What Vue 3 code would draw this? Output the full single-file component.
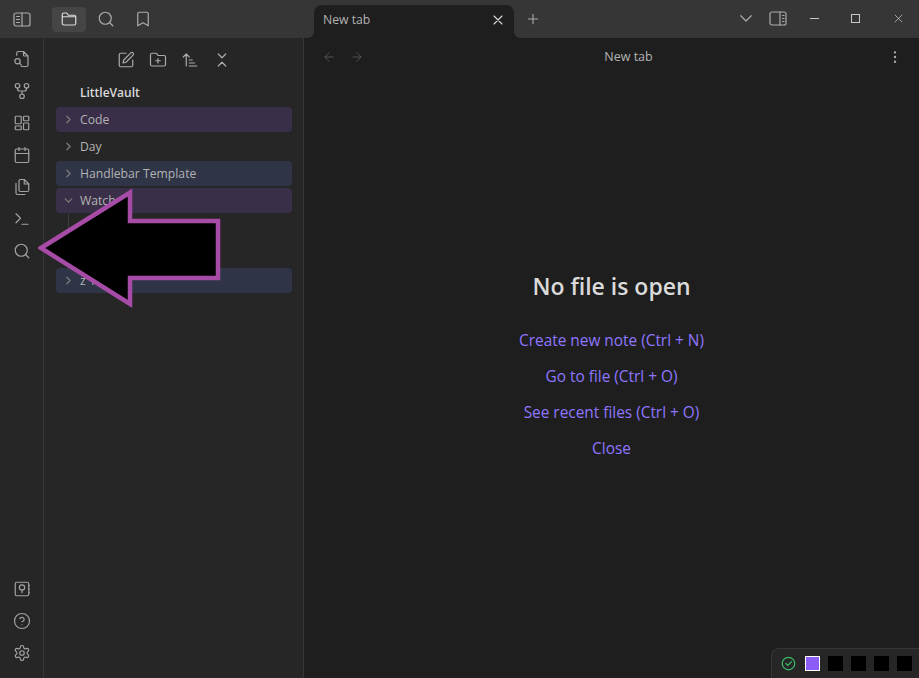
<template>
  <div class="app">
    <!-- Barra superior -->
    <header class="titlebar">
      <div class="tb-left">
        <button class="tb-btn">
          <svg viewBox="0 0 18 15" class="ico panel-ico"><rect x="1" y="1" width="16" height="13" rx="2"/><path d="M9 1v13M3.5 4.500h3M3.500 7.500h3M3.500 10.500h3"/></svg>
        </button>
        <div class="tb-tabs">
          <button class="tb-btn active">
            <svg viewBox="0 0 24 24" class="ico"><path d="M3 9V6a2 2 0 0 1 2-2h4l2 3h8a2 2 0 0 1 2 2v9a2 2 0 0 1-2 2H5a2 2 0 0 1-2-2V9h18"/></svg>
          </button>
          <button class="tb-btn">
            <svg viewBox="0 0 24 24" class="ico"><circle cx="11" cy="11" r="8"/><path d="m21 21-4.300-4.300"/></svg>
          </button>
          <button class="tb-btn">
            <svg viewBox="0 0 24 24" class="ico"><path d="M19 21l-7-4-7 4V5a2 2 0 0 1 2-2h10a2 2 0 0 1 2 2z"/></svg>
          </button>
        </div>
      </div>
      <div class="tab-strip">
        <div class="tab">
          <span>New tab</span>
          <svg viewBox="0 0 24 24" class="ico close-ico"><path d="M18 6 6 18M6 6l12 12"/></svg>
        </div>
        <svg viewBox="0 0 24 24" class="ico plus-ico"><path d="M12 5v14M5 12h14"/></svg>
      </div>
      <div class="tb-right">
        <svg viewBox="0 0 24 24" class="ico chev-ico"><path d="m5 9 7 7 7-7"/></svg>
        <svg viewBox="0 0 18 15" class="ico panel-ico side-ico"><rect x="1" y="1" width="16" height="13" rx="2"/><path d="M11 1v13M13.500 4.500h1.500M13.500 7.500h1.500M13.500 10.500h1.500"/></svg>
        <div class="win-btns">
          <span class="win"><i class="win-min"></i></span>
          <span class="win"><i class="win-max"></i></span>
          <span class="win">
            <svg viewBox="0 0 12 12" class="win-x"><path d="M1 1l10 10M11 1 1 11"/></svg>
          </span>
        </div>
      </div>
    </header>

    <div class="body">
      <!-- Ribbon -->
      <nav class="ribbon">
        <div class="rib-group">
          <svg viewBox="0 0 24 24" class="ico"><path d="M14 2v5a1 1 0 0 0 1 1h5M5 7V4a2 2 0 0 1 2-2h7l6 6v12a2 2 0 0 1-2 2h-7"/><circle cx="6" cy="15" r="3.500"/><path d="m9 18 2 2"/></svg>
          <svg viewBox="0 0 24 24" class="ico"><circle cx="6" cy="5" r="3"/><circle cx="18" cy="5" r="3"/><circle cx="12" cy="19" r="3"/><path d="M6 8v1a3 3 0 0 0 3 3h6a3 3 0 0 0 3-3V8M12 12v4"/></svg>
          <svg viewBox="0 0 24 24" class="ico"><rect x="3" y="3" width="8" height="10" rx="1"/><rect x="14" y="3" width="7" height="6" rx="1"/><rect x="14" y="12" width="7" height="9" rx="1"/><rect x="3" y="16" width="8" height="5" rx="1"/></svg>
          <svg viewBox="0 0 24 24" class="ico"><rect x="3" y="4" width="18" height="18" rx="2"/><path d="M8 2v4M16 2v4M3 10h18"/></svg>
          <svg viewBox="0 0 24 24" class="ico"><path d="M15 2h-5a2 2 0 0 0-2 2v12a2 2 0 0 0 2 2h9a2 2 0 0 0 2-2V8z"/><path d="M15 2v6h6M4 7v13a2 2 0 0 0 2 2h10"/></svg>
          <svg viewBox="0 0 24 24" class="ico"><path d="m4 17 6-6-6-6M12 19h8"/></svg>
          <svg viewBox="0 0 24 24" class="ico"><circle cx="11" cy="11" r="8"/><path d="m21 21-4.300-4.300"/></svg>
        </div>
        <div class="rib-group">
          <svg viewBox="0 0 24 24" class="ico"><rect x="3" y="3" width="18" height="18" rx="2"/><circle cx="12" cy="10" r="3.500"/><path d="M12 13.500V17M21 7h1M21 12h1M21 17h1"/></svg>
          <svg viewBox="0 0 24 24" class="ico"><circle cx="12" cy="12" r="10"/><path d="M9.100 9a3 3 0 0 1 5.800 1c0 2-3 3-3 3M12 17h.01"/></svg>
          <svg viewBox="0 0 24 24" class="ico"><path d="M12.200 2h-.4a2 2 0 0 0-2 2v.2a2 2 0 0 1-1 1.700l-.4.3a2 2 0 0 1-2 0l-.2-.1a2 2 0 0 0-2.700.7l-.2.4a2 2 0 0 0 .7 2.700l.2.1a2 2 0 0 1 1 1.700v.5a2 2 0 0 1-1 1.700l-.2.1a2 2 0 0 0-.7 2.700l.2.4a2 2 0 0 0 2.700.7l.2-.1a2 2 0 0 1 2 0l.4.3a2 2 0 0 1 1 1.700v.2a2 2 0 0 0 2 2h.4a2 2 0 0 0 2-2v-.2a2 2 0 0 1 1-1.700l.4-.3a2 2 0 0 1 2 0l.2.1a2 2 0 0 0 2.700-.7l.2-.4a2 2 0 0 0-.7-2.700l-.2-.1a2 2 0 0 1-1-1.700v-.5a2 2 0 0 1 1-1.700l.2-.1a2 2 0 0 0 .7-2.700l-.2-.4a2 2 0 0 0-2.700-.7l-.2.1a2 2 0 0 1-2 0l-.4-.3a2 2 0 0 1-1-1.700V4a2 2 0 0 0-2-2z"/><circle cx="12" cy="12" r="3"/></svg>
        </div>
      </nav>

      <!-- Explorador -->
      <aside class="sidebar">
        <div class="side-actions">
          <svg viewBox="0 0 24 24" class="ico"><path d="M12 3H5a2 2 0 0 0-2 2v14a2 2 0 0 0 2 2h14a2 2 0 0 0 2-2v-7"/><path d="M18.400 2.600a2.100 2.100 0 1 1 3 3L12 15l-4 1 1-4z"/></svg>
          <svg viewBox="0 0 24 24" class="ico"><path d="M20 20a2 2 0 0 0 2-2V8a2 2 0 0 0-2-2h-8l-2-3H4a2 2 0 0 0-2 2v13a2 2 0 0 0 2 2zM12 10v6M9 13h6"/></svg>
          <svg viewBox="0 0 24 24" class="ico"><path d="m3 8 4-4 4 4M7 4v16M11 12h4M11 16h7M11 20h10"/></svg>
          <svg viewBox="0 0 24 24" class="ico"><path d="m7 20 5-5 5 5M7 4l5 5 5-5"/></svg>
        </div>
        <div class="vault">LittleVault</div>
        <div class="tree">
          <div v-for="row in rows" :key="row.id" class="row" :class="[row.tone, { child: row.label === null }]">
            <svg v-if="row.label !== null" viewBox="0 0 24 24" class="ico row-chev"><path :d="row.open ? 'm6 9 6 6 6-6' : 'm9 6 6 6-6 6'"/></svg>
            <i v-else class="guide"></i>
            <span class="row-label">{{ row.label }}</span>
          </div>
        </div>
      </aside>

      <!-- Contenido principal -->
      <main class="main">
        <div class="view-head">
          <div class="nav-arrows">
            <svg viewBox="0 0 24 24" class="ico"><path d="m12 19-7-7 7-7M19 12H5"/></svg>
            <svg viewBox="0 0 24 24" class="ico"><path d="M5 12h14M12 5l7 7-7 7"/></svg>
          </div>
          <span class="view-title">New tab</span>
          <svg viewBox="0 0 24 24" class="ico more-ico"><circle cx="12" cy="5" r="1"/><circle cx="12" cy="12" r="1"/><circle cx="12" cy="19" r="1"/></svg>
        </div>
        <div class="empty">
          <h1>No file is open</h1>
          <a v-for="link in links" :key="link">{{ link }}</a>
        </div>
      </main>
    </div>

    <!-- Barra de estado -->
    <div class="status">
      <svg viewBox="0 0 24 24" class="ok-ico"><circle cx="12" cy="12" r="10"/><path d="m8 12 3 3 6-6"/></svg>
      <span class="swatch current"></span>
      <span v-for="n in 4" :key="n" class="swatch"></span>
    </div>

    <!-- Flecha de anotación sobre la captura -->
    <svg class="arrow" width="190" height="130" viewBox="0 0 190 130">
      <path d="M3 60 92 4.500V33H180V90H92V116Z"/>
    </svg>
  </div>
</template>

<script setup>
const rows = [
  { id: 1, label: 'Code', tone: 'purple' },
  { id: 2, label: 'Day', tone: '' },
  { id: 3, label: 'Handlebar Template', tone: 'blue' },
  { id: 4, label: 'Watch', tone: 'purple', open: true },
  { id: 5, label: null, tone: '' },
  { id: 6, label: null, tone: '' },
  { id: 7, label: 'z 1', tone: 'blue' }
]

const links = [
  'Create new note (Ctrl + N)',
  'Go to file (Ctrl + O)',
  'See recent files (Ctrl + O)',
  'Close'
]
</script>

<style>
html,
body {
  margin: 0;
  background: #1e1e1e;
}
</style>

<style scoped>
.app {
  position: relative;
  width: 919px;
  height: 678px;
  overflow: hidden;
  display: flex;
  flex-direction: column;
  background: #1e1e1e;
  color: #dadada;
  font-family: "Open Sans", "Noto Sans", sans-serif;
}

.ico {
  width: 18px;
  height: 18px;
  fill: none;
  stroke: #ababab;
  stroke-width: 1.6;
  stroke-linecap: round;
  stroke-linejoin: round;
  flex: none;
}

.titlebar {
  height: 38px;
  flex: none;
  display: flex;
  background: #363636;
}

.tb-left {
  width: 304px;
  flex: none;
  display: flex;
  align-items: center;
  padding: 0 0 0 5px;
  box-sizing: border-box;
  gap: 13px;
}

.tb-tabs {
  display: flex;
  gap: 3px;
}

.tb-btn {
  width: 34px;
  height: 25px;
  padding: 0;
  border: none;
  border-radius: 4px;
  background: transparent;
  display: flex;
  align-items: center;
  justify-content: center;
}

.tb-btn.active {
  background: #454545;
}

.tb-btn.active .ico {
  stroke: #dadada;
}

.panel-ico {
  width: 18px;
  height: 15px;
  stroke-width: 1.2;
}

.tab-strip {
  flex: 1;
  display: flex;
  align-items: flex-end;
  padding-left: 10px;
}

.tab {
  position: relative;
  width: 200px;
  height: 33px;
  box-sizing: border-box;
  background: #1e1e1e;
  border-radius: 8px 8px 0 0;
  display: flex;
  align-items: center;
  justify-content: space-between;
  padding: 0 8px 4px 9px;
  font-size: 12.2px;
  color: #b3b3b3;
}

/* esquinas invertidas de la pestaña */
.tab::before,
.tab::after {
  content: "";
  position: absolute;
  bottom: 0;
  width: 6px;
  height: 6px;
}

.tab::before {
  left: -6px;
  background: radial-gradient(circle at 0 0, #363636 5.500px, #1e1e1e 6px);
}

.tab::after {
  right: -6px;
  background: radial-gradient(circle at 100% 0, #363636 5.500px, #1e1e1e 6px);
}

.close-ico {
  width: 16px;
  height: 16px;
  stroke: #dadada;
}

.plus-ico {
  width: 16px;
  height: 16px;
  margin: 0 0 11px 11px;
}

.tb-right {
  display: flex;
  align-items: center;
  padding-bottom: 2px;
}

.chev-ico {
  width: 18px;
  height: 18px;
}

.side-ico {
  margin: 0 6px 0 14px;
}

.win-btns {
  display: flex;
}

.win {
  width: 42px;
  height: 36px;
  display: flex;
  align-items: center;
  justify-content: center;
}

.win-min {
  display: block;
  width: 9px;
  height: 1px;
  background: #c8c8c8;
}

.win-max {
  display: block;
  width: 7px;
  height: 7px;
  border: 1px solid #c8c8c8;
  margin-right: 1px;
}

.win-x {
  width: 9px;
  height: 9px;
  fill: none;
  stroke: #c8c8c8;
  stroke-width: 1;
}

.body {
  flex: 1;
  display: flex;
  min-height: 0;
}

.ribbon {
  width: 43px;
  flex: none;
  box-sizing: content-box;
  background: #262626;
  border-right: 1px solid #363636;
  display: flex;
  flex-direction: column;
  justify-content: space-between;
  align-items: center;
  padding: 12px 0 16px;
}

.rib-group {
  display: flex;
  flex-direction: column;
  align-items: center;
  gap: 14px;
}

.rib-group .ico {
  width: 18px;
  height: 18px;
  stroke: #a3a3a3;
}

.sidebar {
  width: 259px;
  flex: none;
  background: #262626;
  border-right: 1px solid #363636;
  box-sizing: content-box;
}

.side-actions {
  height: 43px;
  display: flex;
  align-items: center;
  justify-content: center;
  gap: 14px;
}

.vault {
  margin-left: 36px;
  height: 23px;
  line-height: 23px;
  font-size: 12px;
  font-weight: 600;
  color: #dadada;
}

.tree {
  margin: 3px 11px 0 12px;
  display: flex;
  flex-direction: column;
  gap: 2px;
}

.row {
  height: 25px;
  border-radius: 4px;
  display: flex;
  align-items: center;
  font-size: 12.2px;
  color: #b3b3b3;
}

.row.child {
  height: 24.500px;
}

.row.purple {
  background: #3a2f48;
}

.row.blue {
  background: #2f3447;
}

.row-chev {
  width: 13px;
  height: 13px;
  margin-left: 6px;
  stroke: #7a7a7a;
  stroke-width: 2.400;
}

.row-label {
  margin-left: 5px;
}

.guide {
  display: block;
  width: 1px;
  height: 27px;
  margin: 0 0 0 12px;
  background: #3f3f3f;
}

.main {
  flex: 1;
  min-width: 0;
  display: flex;
  flex-direction: column;
}

.view-head {
  height: 37px;
  flex: none;
  display: flex;
  align-items: center;
  justify-content: space-between;
  padding: 0 16px 0 18px;
  font-size: 12.500px;
  color: #b3b3b3;
}

.nav-arrows {
  display: flex;
  gap: 14px;
}

.nav-arrows .ico {
  width: 14px;
  height: 14px;
  stroke: #555;
}

.more-ico {
  width: 16px;
  height: 16px;
  fill: #ababab;
}

.view-title {
  margin-left: 6px;
}

.empty {
  display: flex;
  flex-direction: column;
  align-items: center;
  padding-top: 196px;
}

.empty h1 {
  margin: 0 0 22px;
  font-size: 23px;
  line-height: 30px;
  font-weight: 600;
  color: #dadada;
}

.empty a {
  height: 36px;
  line-height: 36px;
  font-size: 15.400px;
  color: #8e76ff;
}

.status {
  position: absolute;
  right: 0;
  bottom: 0;
  width: 148px;
  height: 30px;
  box-sizing: border-box;
  background: #262626;
  border: 1px solid #363636;
  border-width: 1px 0 0 1px;
  border-radius: 8px 0 0 0;
  display: flex;
  align-items: center;
  padding: 0 7px 0 9px;
  gap: 8px;
}

.ok-ico {
  width: 15px;
  height: 15px;
  fill: none;
  stroke: #3dba68;
  stroke-width: 2;
  stroke-linecap: round;
  stroke-linejoin: round;
  margin-right: 1px;
}

.swatch {
  width: 15px;
  height: 15px;
  background: #000;
}

.swatch.current {
  width: 13px;
  height: 13px;
  background: #8b5cf6;
  border: 1px solid #fff;
}

.arrow {
  position: absolute;
  left: 38px;
  top: 188px;
}

.arrow path {
  fill: #000;
  stroke: #a64ca6;
  stroke-width: 4.500;
  stroke-linejoin: miter;
}
</style>
